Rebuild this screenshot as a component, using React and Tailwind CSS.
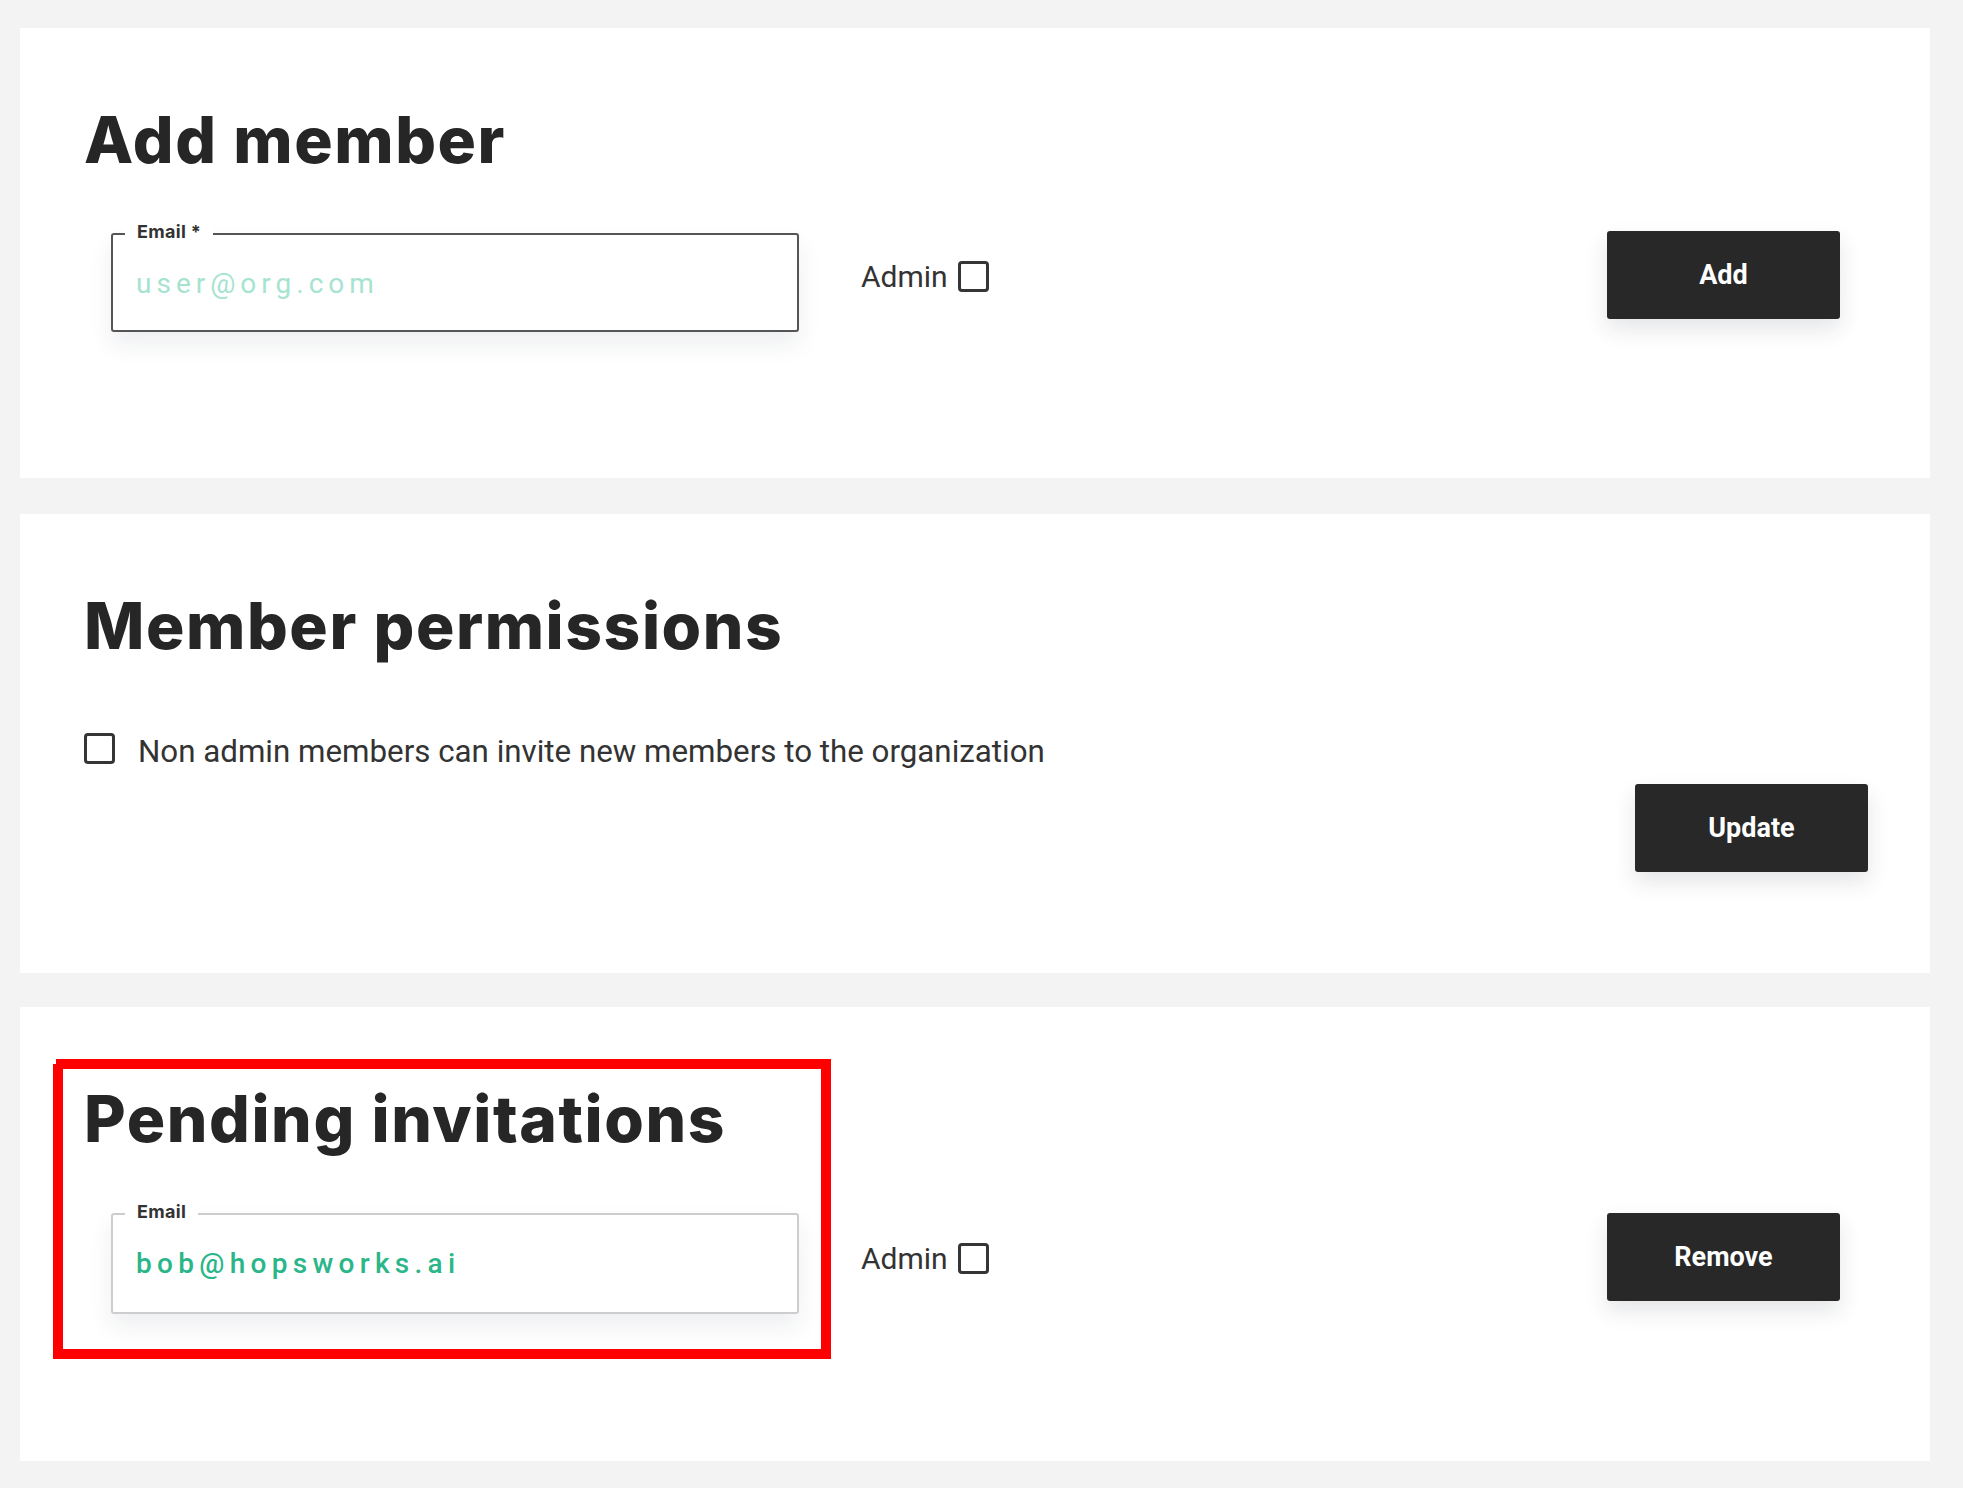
import React from "react";

const roboto = "font-['Roboto',sans-serif]";

function Heading({ children }) {
  return (
    <h2 className="font-['Inter',sans-serif] font-extrabold text-[64px] leading-none text-[#262626] tracking-[1.6px]">
      {children}
    </h2>
  );
}

function Checkbox() {
  return <span className="block w-[31px] h-[31px] shrink-0 rounded-[4px] border-[3px] border-[#353535] bg-white" />;
}

function EmailField({ label, text, dark, mt, h }) {
  return (
    <div
      className={`relative ml-[27px] w-[688px] rounded-[3px] border-2 bg-white shadow-[0_12px_24px_rgba(30,40,60,0.08)] ${
        dark ? "border-[#555555]" : "border-[#cdcdcd]"
      } ${mt} ${h}`}
    >
      <span className="absolute -top-[15px] left-[12px] bg-white px-[12px] font-['Inter',sans-serif] text-[18px] font-bold leading-[24px] tracking-[0.3px] text-[#333333]">
        {label}
      </span>
      <div
        className={`pl-[23px] pt-[35px] text-[28px] leading-none ${roboto} ${
          dark ? "text-[#a6e3d0] tracking-[5px]" : "font-medium text-[#2bb68a] tracking-[5.3px]"
        }`}
      >
        {text}
      </div>
    </div>
  );
}

function AdminToggle({ mt }) {
  return (
    <div className={`ml-[62px] flex items-center gap-[10px] ${mt}`}>
      <span className={`text-[30px] leading-[31px] text-[#333333] ${roboto}`}>Admin</span>
      <Checkbox />
    </div>
  );
}

function DarkButton({ children, className }) {
  return (
    <button
      className={`h-[88px] w-[233px] rounded-[3px] bg-[#282828] text-[27px] font-bold text-white shadow-[0_10px_22px_rgba(30,40,60,0.12)] ${roboto} ${className}`}
    >
      {children}
    </button>
  );
}

export default function App() {
  return (
    <div className="min-h-[1488px] bg-[#f3f3f3] pt-[28px] pl-[20px] pr-[33px] pb-[27px]">
      {/* Add member */}
      <section className="h-[450px] bg-white pt-[80px] pl-[64px] pr-[90px]">
        <Heading>Add member</Heading>
        <div className="mt-[59px] flex items-start">
          <EmailField label="Email *" text="user@org.com" dark mt="mt-[2px]" h="h-[99px]" />
          <AdminToggle mt="mt-[30px]" />
          <DarkButton className="ml-auto">Add</DarkButton>
        </div>
      </section>

      {/* Member permissions */}
      <section className="mt-[36px] h-[459px] bg-white pt-[80px] pl-[64px] pr-[62px] flex flex-col">
        <Heading>Member permissions</Heading>
        <div className="mt-[72px] flex items-center gap-[23px]">
          <Checkbox />
          <span className={`mt-[6px] text-[31.3px] leading-[31px] text-[#333333] ${roboto}`}>
            Non admin members can invite new members to the organization
          </span>
        </div>
        <div className="mt-[17px] flex justify-end">
          <DarkButton>Update</DarkButton>
        </div>
      </section>

      {/* Pending invitations */}
      <section className="relative mt-[34px] h-[454px] bg-white pt-[80px] pl-[64px] pr-[90px]">
        <Heading>Pending invitations</Heading>
        <div className="mt-[62px] flex items-start">
          <EmailField label="Email" text="bob@hopsworks.ai" mt="mt-0" h="h-[101px]" />
          <AdminToggle mt="mt-[30px]" />
          <DarkButton className="ml-auto">Remove</DarkButton>
        </div>
        <div className="pointer-events-none absolute left-[33px] top-[52px] h-[300px] w-[778px] border-[10px] border-[#ff0000]" />
        <div className="pointer-events-none absolute left-[33px] top-[52px] h-[5px] w-[3px] bg-white" />
      </section>
    </div>
  );
}
